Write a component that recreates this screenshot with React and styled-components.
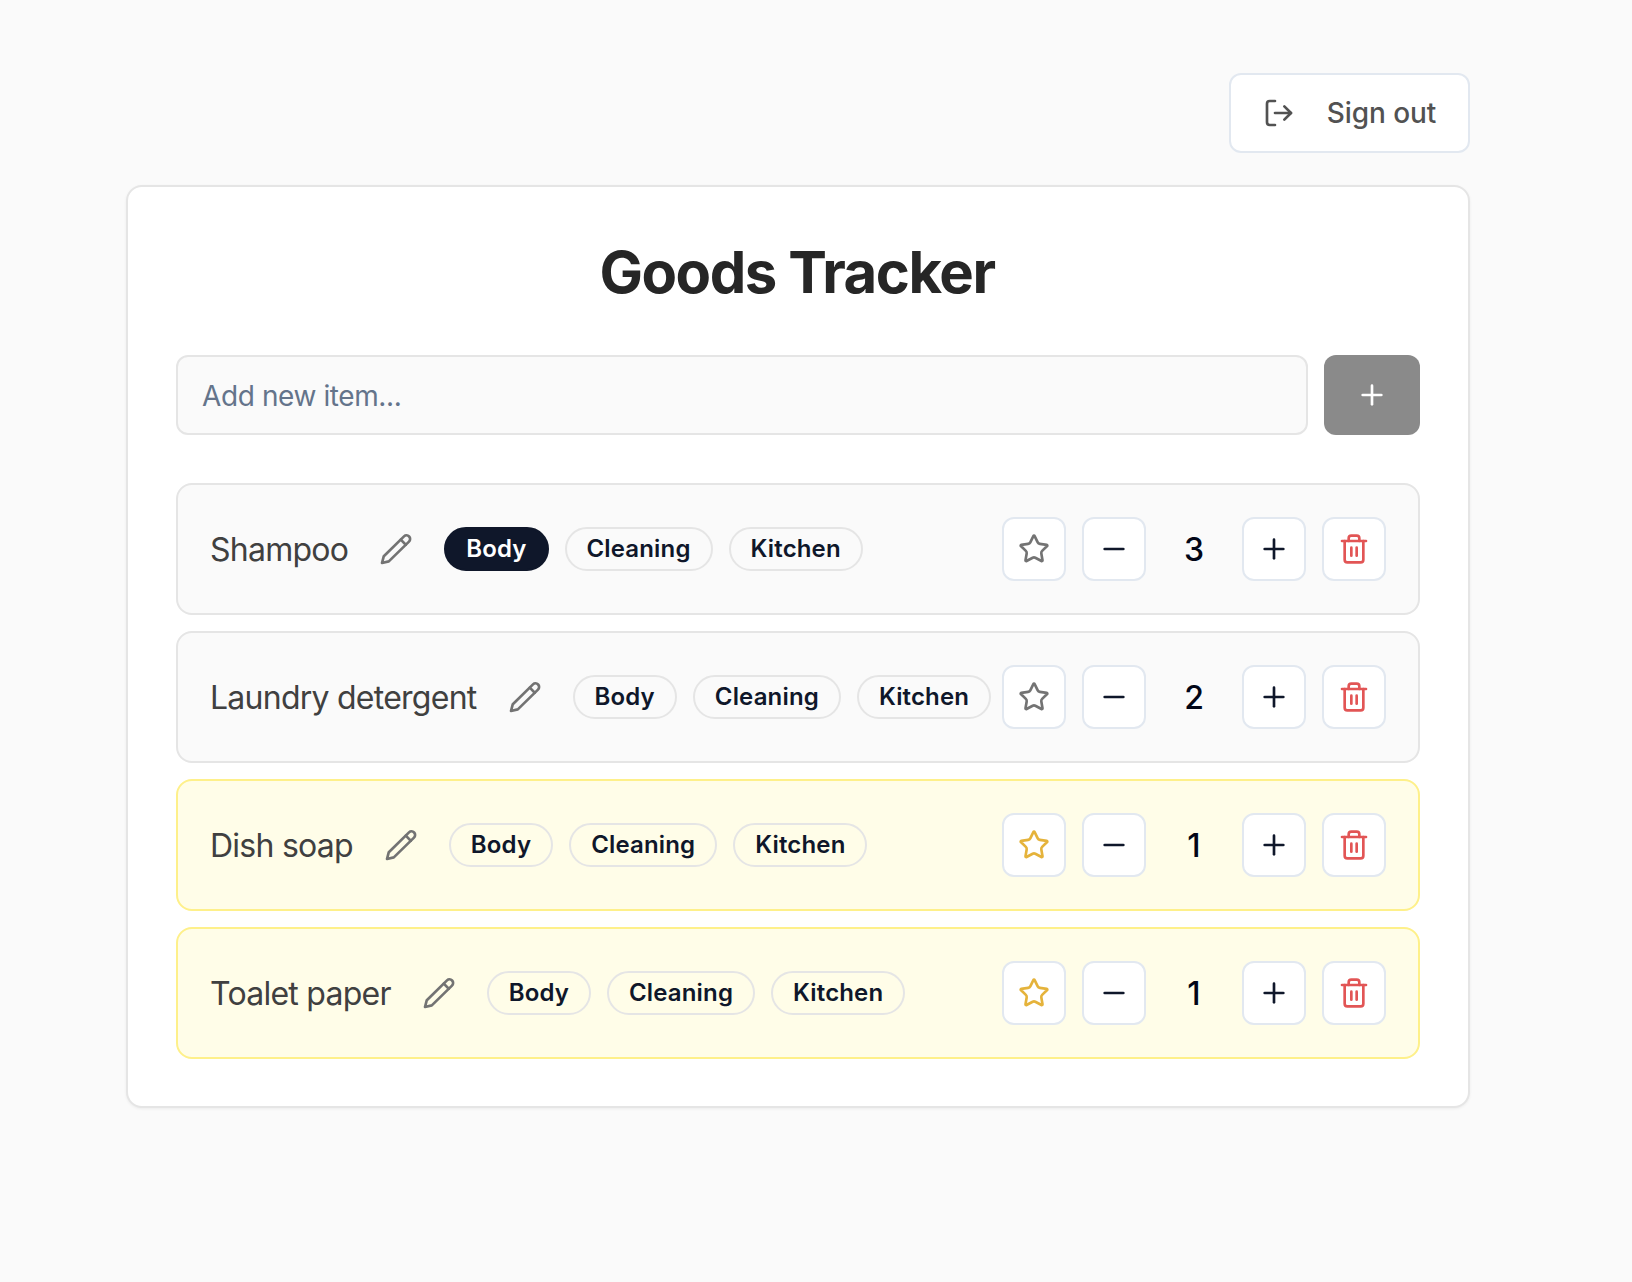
import React from 'react';
import styled, { createGlobalStyle } from 'styled-components';
import { LogOut, Star, Minus, Plus, Trash2 } from 'lucide-react';

const Global = createGlobalStyle`
  html, body { margin: 0; padding: 0; background: #fafafa; font-family: Inter, "Liberation Sans", sans-serif; }
  * { box-sizing: border-box; }
`;
const Page = styled.div`
  min-height: 1282px;
  padding: 73px 0 0 126px;
  width: 1470px;
`;
const Top = styled.div`
  display: flex;
  justify-content: flex-end;
  margin-bottom: 32px;
`;
const SignOut = styled.button`
  width: 241px;
  height: 80px;
  display: flex;
  align-items: center;
  justify-content: center;
  gap: 32px;
  background: #fff;
  border: 2px solid #e2e8f0;
  border-radius: 12px;
  color: #525252;
  font: 500 28px Inter, sans-serif;
  letter-spacing: -0.1px;
`;
const Card = styled.main`
  background: #fff;
  border: 2px solid #e5e5e5;
  border-radius: 16px;
  padding: 48px 48px;
  height: 923px;
  box-shadow: 0 1px 3px rgba(0,0,0,.06);
`;
const Title = styled.h1`
  margin: 0 0 47px;
  padding: 1px 2px 0 0;
  text-align: center;
  font-size: 58px;
  line-height: 72px;
  font-weight: 700;
  letter-spacing: -1.45px;
  color: #262626;
`;
const AddRow = styled.div`
  display: flex;
  gap: 16px;
  margin-bottom: 48px;
`;
const Input = styled.input`
  flex: 1;
  height: 80px;
  background: #fafafa;
  border: 2px solid #e5e5e5;
  border-radius: 12px;
  padding: 2px 24px 0;
  font: 400 28px Inter, sans-serif;
  letter-spacing: -0.4px;
  &::placeholder { color: #64748b; opacity: 1; }
`;
const AddButton = styled.button`
  width: 96px;
  height: 80px;
  border: 0;
  border-radius: 12px;
  background: #8a8a8a;
  color: #fff;
  display: flex;
  align-items: center;
  justify-content: center;
`;
const List = styled.div`
  display: flex;
  flex-direction: column;
  gap: 16px;
`;
const Row = styled.div`
  height: 132px;
  display: flex;
  align-items: center;
  padding: 0 32px;
  border: 2px solid ${p => (p.$low ? '#fef08a' : '#e5e5e5')};
  background: ${p => (p.$low ? '#fffde8' : '#fafafa')};
  border-radius: 16px;
`;
const Name = styled.span`
  font-size: 32px;
  letter-spacing: -0.75px;
  color: #404040;
  white-space: nowrap;
`;
const EditBtn = styled.span`
  display: flex;
  margin: 0 32px;
  color: #737373;
`;
const Tags = styled.div`
  display: flex;
  gap: 16px;
`;
const Tag = styled.span`
  height: 44px;
  padding: 0 20px 2px;
  display: flex;
  align-items: center;
  border-radius: 22px;
  font-size: 24px;
  font-weight: 600;
  letter-spacing: 0.15px;
  border: 2px solid ${p => (p.$on ? '#0f172a' : '#e5e5e5')};
  background: ${p => (p.$on ? '#0f172a' : 'transparent')};
  color: ${p => (p.$on ? '#fff' : '#0f172a')};
`;
const Controls = styled.div`
  margin-left: auto;
  display: flex;
  align-items: center;
  gap: 16px;
`;
const IconBtn = styled.button`
  width: 64px;
  height: 64px;
  background: #fff;
  border: 2px solid #e2e8f0;
  border-radius: 12px;
  padding: 0;
  display: flex;
  align-items: center;
  justify-content: center;
  color: ${p => p.$color || '#0f172a'};
`;
const Qty = styled.span`
  width: 64px;
  text-align: center;
  font-size: 32px;
  font-weight: 500;
  color: #020617;
`;

const PencilIcon = () => (
  <svg width="32" height="32" viewBox="0 0 32 32" fill="none" stroke="currentColor" strokeWidth="2.67" strokeLinecap="round" strokeLinejoin="round">
    <path d="M2 30 3.8 23.2 24 3.4A3.6 3.6 0 0 1 29 8.6L8.8 28.4Z" />
    <path d="M20.8 6.6 25.8 11.7" />
  </svg>
);

const items = [
  { name: 'Shampoo', qty: 3, on: true },
  { name: 'Laundry detergent', qty: 2 },
  { name: 'Dish soap', qty: 1, low: true },
  { name: 'Toalet paper', qty: 1, low: true },
];

export default function App() {
  return (
    <Page>
      <Global />
      <Top>
        <SignOut><LogOut size={32} strokeWidth={2} />Sign out</SignOut>
      </Top>
      <Card>
        <Title>Goods Tracker</Title>
        <AddRow>
          <Input placeholder="Add new item..." />
          <AddButton><Plus size={32} strokeWidth={2} /></AddButton>
        </AddRow>
        <List>
          {items.map(it => (
            <Row key={it.name} $low={it.low}>
              <Name>{it.name}</Name>
              <EditBtn><PencilIcon /></EditBtn>
              <Tags>
                <Tag $on={it.on}>Body</Tag>
                <Tag>Cleaning</Tag>
                <Tag>Kitchen</Tag>
              </Tags>
              <Controls>
                <IconBtn $color={it.low ? '#e5b33b' : '#737373'}><Star size={32} strokeWidth={2} /></IconBtn>
                <IconBtn><Minus size={32} strokeWidth={2} /></IconBtn>
                <Qty>{it.qty}</Qty>
                <IconBtn><Plus size={32} strokeWidth={2} /></IconBtn>
                <IconBtn $color="#e25555"><Trash2 size={32} strokeWidth={2} /></IconBtn>
              </Controls>
            </Row>
          ))}
        </List>
      </Card>
    </Page>
  );
}
